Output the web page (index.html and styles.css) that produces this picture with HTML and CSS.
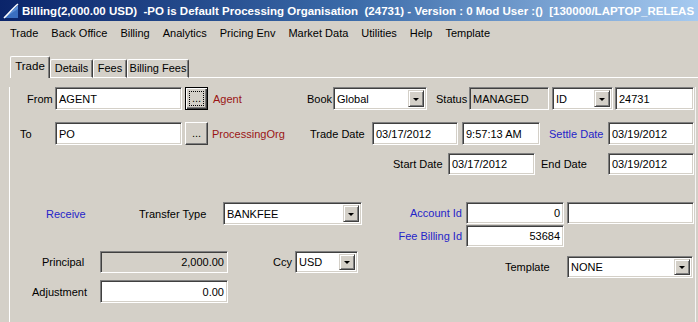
FILE: index.html
```html
<!DOCTYPE html>
<html lang="en">
<head>
    <meta charset="UTF-8">
    <title>Billing</title>
    <link rel="stylesheet" href="styles.css">
</head>
<body>

<div class="window">
    <div class="titlebar">
        <svg class="app-icon" width="16" height="16" viewBox="0 0 16 16">
            <polygon points="1,15 15,2 15,15" fill="#5b8fd6"/>
            <polygon points="1,15 15,6 15,15" fill="#3a6fc0"/>
            <path d="M1 15 C6 10 10 5 15 1" stroke="#ffffff" stroke-width="1.6" fill="none"/>
        </svg>
        <span class="title-text">Billing(2,000.00 USD)&nbsp; -PO is Default Processing Organisation&nbsp; (24731) - Version : 0 Mod User :()&nbsp; [130000/LAPTOP_RELEAS</span>
    </div>

    <div class="menubar">
        <span class="menu-item">Trade</span>
        <span class="menu-item">Back Office</span>
        <span class="menu-item">Billing</span>
        <span class="menu-item">Analytics</span>
        <span class="menu-item">Pricing Env</span>
        <span class="menu-item">Market Data</span>
        <span class="menu-item">Utilities</span>
        <span class="menu-item">Help</span>
        <span class="menu-item">Template</span>
    </div>

    <div class="tabs">
        <div class="tab active tab-trade">Trade</div>
        <div class="tab tab-details">Details</div>
        <div class="tab tab-fees">Fees</div>
        <div class="tab tab-billing">Billing Fees</div>
    </div>

    <div class="panel">
        <!-- from / book / status -->
        <div class="row row-from">
            <span class="lbl l-from">From</span>
            <div class="field w127">AGENT</div>
            <div class="btn btn-default"><span class="focus">...</span></div>
            <span class="lbl red l-agent">Agent</span>
            <span class="lbl l-book">Book</span>
            <div class="field combo w94"><span class="combo-text">Global</span><span class="arrow"></span></div>
            <span class="lbl l-status">Status</span>
            <div class="field disabled w80">MANAGED</div>
            <div class="field combo w61 ml3"><span class="combo-text">ID</span><span class="arrow"></span></div>
            <div class="field w79 ml2">24731</div>
        </div>

        <!-- to / trade date -->
        <div class="row row-to">
            <span class="lbl l-to">To</span>
            <div class="field w127">PO</div>
            <div class="btn">...</div>
            <span class="lbl red l-porg">ProcessingOrg</span>
            <span class="lbl l-tdate">Trade Date</span>
            <div class="field w86">03/17/2012</div>
            <div class="field w78 ml4">9:57:13 AM</div>
            <span class="lbl blue l-settle">Settle Date</span>
            <div class="field w86">03/19/2012</div>
        </div>

        <!-- start / end -->
        <div class="row row-start">
            <span class="lbl l-start">Start Date</span>
            <div class="field w87">03/17/2012</div>
            <span class="lbl l-end">End Date</span>
            <div class="field w86">03/19/2012</div>
        </div>

        <div class="lower">
            <div class="lower-left">
                <div class="row row-a">
                    <span class="lbl blue l-receive">Receive</span>
                    <span class="lbl l-ttype">Transfer Type</span>
                    <div class="field combo w139"><span class="combo-text">BANKFEE</span><span class="arrow"></span></div>
                </div>
                <div class="row row-principal">
                    <span class="lbl l-principal">Principal</span>
                    <div class="field disabled num w128">2,000.00</div>
                    <span class="lbl l-ccy">Ccy</span>
                    <div class="field combo w63"><span class="combo-text">USD</span><span class="arrow"></span></div>
                </div>
                <div class="row row-adjust">
                    <span class="lbl l-adjust">Adjustment</span>
                    <div class="field num w128">0.00</div>
                </div>
            </div>

            <div class="lower-right">
                <div class="row row-acct">
                    <span class="lbl blue l-right">Account Id</span>
                    <div class="field num w98">0</div>
                    <div class="field w127 ml3"></div>
                </div>
                <div class="row row-fee">
                    <span class="lbl blue l-right">Fee Billing Id</span>
                    <div class="field num w98">53684</div>
                </div>
                <div class="row row-template">
                    <span class="lbl l-template">Template</span>
                    <div class="field combo w126"><span class="combo-text">NONE</span><span class="arrow"></span></div>
                </div>
            </div>
        </div>
    </div>
</div>

</body>
</html>
```

FILE: styles.css
```css
body {
    margin: 0;
    font-family: "Liberation Sans", Arial, sans-serif;
    font-size: 11px;
    color: #000;
    background-color: #d4d0c8;
}

.window {
    width: 698px;
    height: 322px;
    overflow: hidden;
    background-color: #d4d0c8;
}

/* title bar */
.titlebar {
    height: 21px;
    display: flex;
    align-items: center;
    background: linear-gradient(to right, #0a246a 0%, #3a6aa8 50%, #a6caf0 100%);
    white-space: nowrap;
    overflow: hidden;
}

.app-icon {
    margin-left: 3px;
    margin-right: 3px;
    flex-shrink: 0;
}

.title-text {
    color: #fff;
    font-weight: bold;
    font-size: 11.5px;
}

/* menu */
.menubar {
    height: 24px;
    display: flex;
    align-items: center;
    padding-left: 4px;
}

.menu-item {
    padding: 0 6px;
    margin-right: 1px;
}

/* tabs */
.tabs {
    display: flex;
    align-items: flex-end;
    height: 22px;
    margin-top: 11px;
    margin-left: 10px;
}

.tabs::after {
    content: "";
    flex: 1;
    border-bottom: 1px solid #fff;
}

.tab {
    box-sizing: border-box;
    height: 19px;
    border-top: 1px solid #fff;
    border-left: 1px solid #fff;
    border-right: 1px solid #404040;
    border-bottom: 1px solid #fff;
    box-shadow: inset -1px 0 0 #808080;
    border-radius: 2px 2px 0 0;
    text-align: center;
    line-height: 17px;
}

.tab.active {
    height: 22px;
    border-bottom: none;
    line-height: 19px;
    font-size: 11.5px;
}

.tab-trade { width: 40px; }
.tab-details { width: 43px; }
.tab-fees { width: 34px; }
.tab-billing { width: 62px; }

/* panel */
.panel {
    margin-left: 9px;
    width: 685px;
    height: 250px;
    border-left: 1px solid #fff;
    border-right: 1px solid #f4f4f4;
}

.row {
    display: flex;
    align-items: center;
}

.row-from { margin-top: 9px; height: 23px; }
.row-to { margin-top: 12px; height: 23px; }
.row-start { margin-top: 8px; height: 22px; }

.lower {
    display: flex;
    margin-top: 27px;
}

.lower-left { width: 370px; }

.row-a { height: 23px; }
.row-principal { margin-top: 26px; height: 22px; }
.row-adjust { margin-top: 7px; height: 23px; }

.row-acct { height: 22px; }
.row-fee { margin-top: 1px; height: 22px; }
.row-template { margin-top: 9px; height: 22px; }

/* labels */
.lbl {
    flex-shrink: 0;
    white-space: nowrap;
}

.red { color: #9a1414; }
.blue { color: #2424c8; }

.l-from { margin-left: 17px; width: 28px; }
.l-agent { margin-left: 5px; width: 94px; }
.l-book { width: 26px; }
.l-status { margin-left: 9px; width: 33px; }
.l-to { margin-left: 10px; width: 35px; }
.l-porg { margin-left: 4px; width: 98px; }
.l-tdate { width: 62px; }
.l-settle { margin-left: 9px; width: 59px; }
.l-start { margin-left: 383px; width: 55px; }
.l-end { margin-left: 6px; width: 67px; }
.l-receive { margin-left: 36px; width: 93px; }
.l-ttype { width: 84px; }
.l-principal { margin-left: 32px; width: 58px; }
.l-ccy { margin-left: 45px; width: 22px; }
.l-adjust { margin-left: 22px; width: 68px; }
.l-right { width: 82px; margin-right: 4px; text-align: right; }
.l-template { margin-left: 125px; width: 62px; }

/* sunken fields */
.field {
    box-sizing: border-box;
    height: 100%;
    flex-shrink: 0;
    background-color: #fff;
    border-top: 1px solid #808080;
    border-left: 1px solid #808080;
    border-bottom: 1px solid #fff;
    border-right: 1px solid #fff;
    box-shadow: inset 1px 1px 0 #404040, inset -1px -1px 0 #d4d0c8;
    padding: 0 3px;
    display: flex;
    align-items: center;
    white-space: nowrap;
    overflow: hidden;
}

.field.disabled { background-color: #d4d0c8; }
.field.num { justify-content: flex-end; }

.field.combo {
    padding: 2px 2px 2px 3px;
}

.combo-text { flex: 1; }

.arrow {
    box-sizing: border-box;
    width: 16px;
    height: 100%;
    background-color: #d4d0c8;
    border-top: 1px solid #d4d0c8;
    border-left: 1px solid #d4d0c8;
    border-right: 1px solid #404040;
    border-bottom: 1px solid #404040;
    box-shadow: inset 1px 1px 0 #fff, inset -1px -1px 0 #808080;
    display: flex;
    align-items: center;
    justify-content: center;
}

.arrow::before {
    content: "";
    border-left: 3px solid transparent;
    border-right: 3px solid transparent;
    border-top: 3px solid #000;
    margin-top: 1px;
}

.w61 { width: 61px; }
.w63 { width: 63px; }
.w78 { width: 78px; }
.w79 { width: 79px; }
.w80 { width: 80px; }
.w86 { width: 86px; }
.w87 { width: 87px; }
.w94 { width: 94px; }
.w98 { width: 98px; }
.w126 { width: 126px; }
.w127 { width: 127px; }
.w128 { width: 128px; }
.w139 { width: 139px; }

.ml2 { margin-left: 2px; }
.ml3 { margin-left: 3px; }
.ml4 { margin-left: 4px; }

/* raised buttons */
.btn {
    box-sizing: border-box;
    width: 23px;
    height: 100%;
    margin-left: 3px;
    flex-shrink: 0;
    background-color: #d4d0c8;
    border-top: 1px solid #fff;
    border-left: 1px solid #fff;
    border-right: 1px solid #404040;
    border-bottom: 1px solid #404040;
    box-shadow: inset -1px -1px 0 #808080;
    display: flex;
    align-items: center;
    justify-content: center;
    line-height: 1;
}

.btn-default {
    border: 1px solid #000;
    box-shadow: inset 1px 1px 0 #fff, inset -1px -1px 0 #404040, inset -2px -2px 0 #808080;
    padding: 3px;
}

.focus {
    flex: 1;
    align-self: stretch;
    border: 1px dotted #000;
    display: flex;
    align-items: center;
    justify-content: center;
}
```
